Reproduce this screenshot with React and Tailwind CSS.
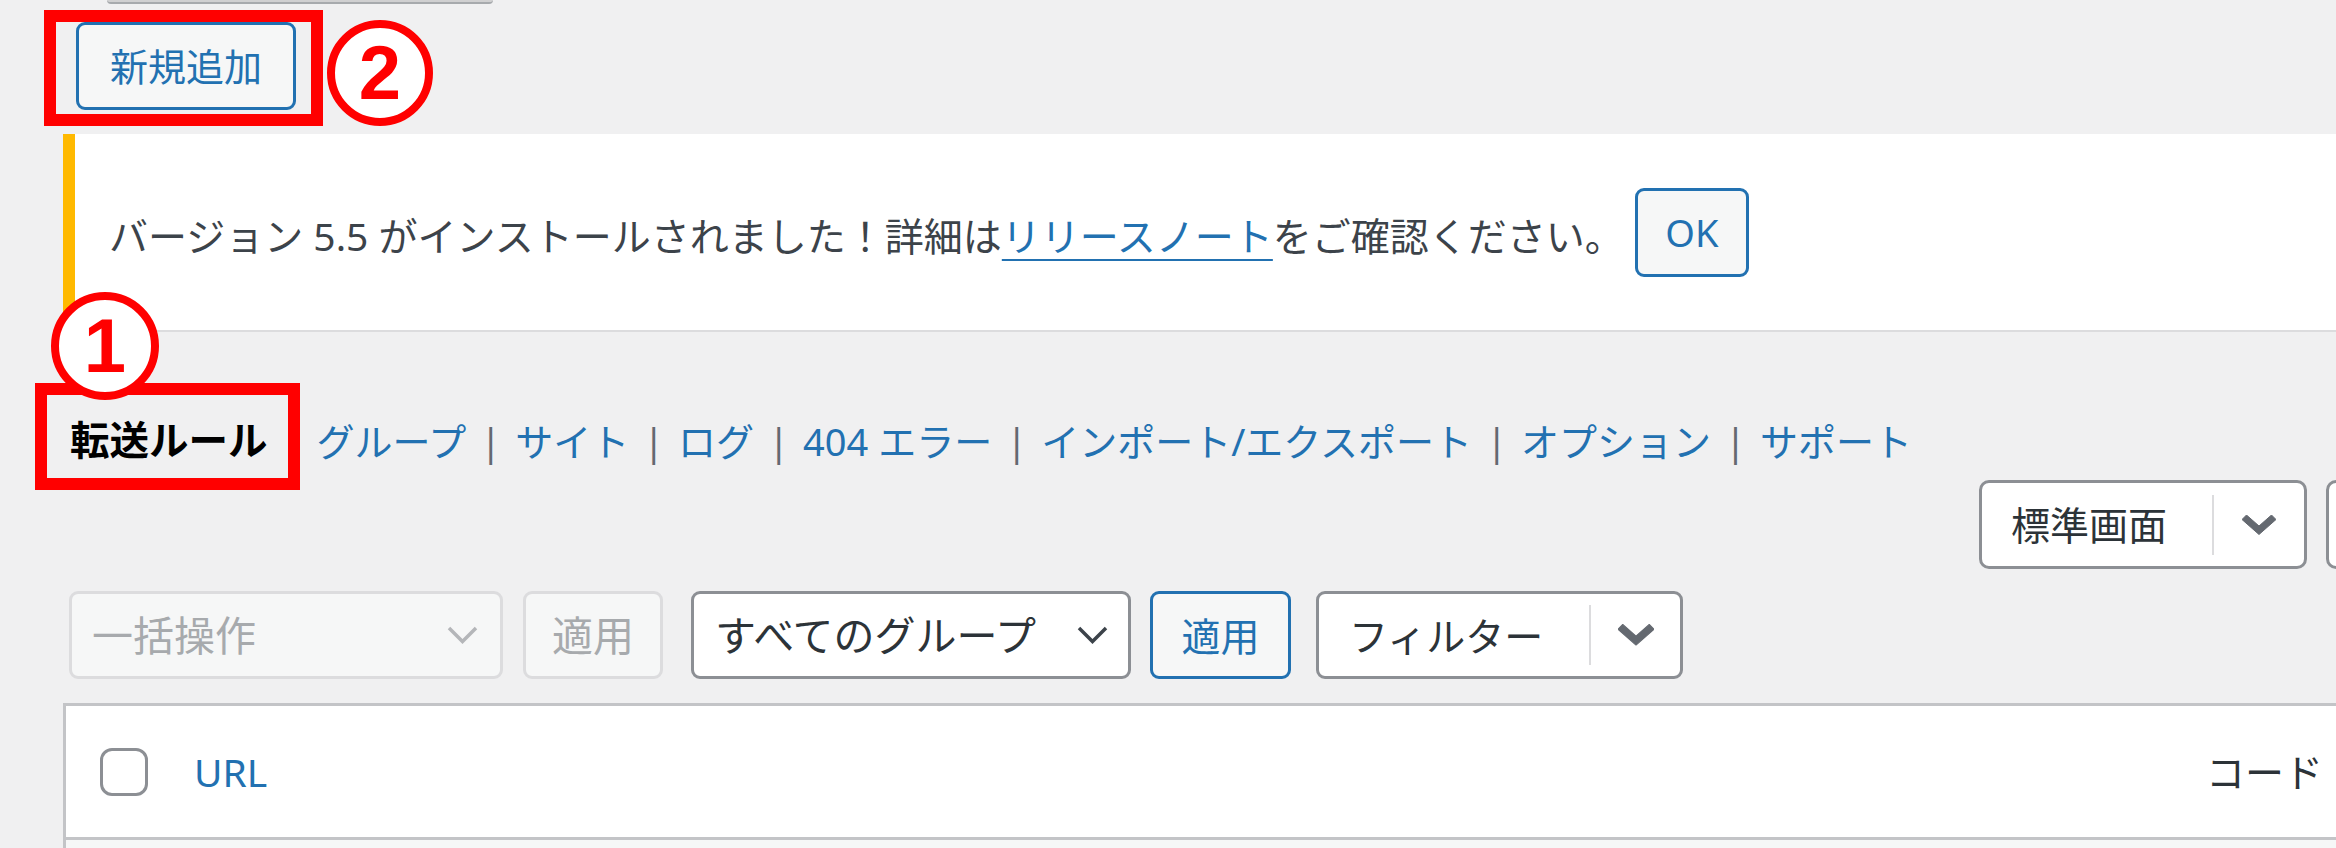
const font = "font-['Noto_Sans','Noto_Sans_CJK_JP',sans-serif]"

function ThinChevron({ color }) {
  return (
    <svg width="31" height="18" viewBox="0 0 31 18" fill="none">
      <polyline points="2,2 15.5,15.5 29,2" stroke={color} strokeWidth="3.5" />
    </svg>
  )
}

function ThickChevron({ w = 34, h = 20 }) {
  return (
    <svg width={w} height={h} viewBox="0 0 34 20">
      <path
        d="M0 4.5 L4.5 0 L17 11 L29.5 0 L34 4.5 L17 19.5 Z"
        fill="#646970"
        stroke="#646970"
        strokeWidth="1"
        strokeLinejoin="round"
      />
    </svg>
  )
}

const tabs = ['グループ', 'サイト', 'ログ', '404 エラー', 'インポート/エクスポート', 'オプション', 'サポート']

function Sep() {
  return <span className="mx-[14px] text-[#646970]">|</span>
}

function Badge({ num, className }) {
  return (
    <div
      className={`absolute flex items-center justify-center rounded-full border-[8px] border-[#ff0000] bg-white font-['Liberation_Sans',Arial,sans-serif] text-[76px] font-bold leading-none text-[#ff0000] ${className}`}
    >
      {num}
    </div>
  )
}

export default function App() {
  return (
    <div className={`relative h-[848px] w-[2336px] overflow-hidden bg-[#f0f0f1] ${font}`}>
      <div className="flex w-[2464px] flex-col pl-[64px]">
        {/* bottom of the element above */}
        <div className="ml-[43px] h-[4px] w-[386px] rounded-b-[6px] border-b-2 border-[#a7aaad] bg-[#d0d0d1]" />

        <div className="mt-[18px] flex">
          <button className="ml-[12px] flex h-[88px] w-[220px] items-center justify-center rounded-[9px] border-[3px] border-[#2271b1] bg-[#f6f7f7] text-[38px] leading-none text-[#2271b1]">
            新規追加
          </button>
        </div>

        {/* update notice */}
        <div className="ml-[-1px] mt-[24px] flex h-[198px] items-center border-b-2 border-l-[12px] border-b-[#dcdcde] border-l-[#ffb900] bg-white pl-[34px] text-[39px] text-[#3c434a]">
          <p className="mt-[7px] whitespace-nowrap leading-none">
            バージョン 5.5 がインストールされました！詳細は
            <a className="text-[#2271b1] underline decoration-2 underline-offset-[8px]">リリースノート</a>
            をご確認ください。
          </p>
          <button className="ml-[11px] flex h-[89px] w-[114px] items-center justify-center rounded-[9px] border-[3px] border-[#2271b1] bg-[#f6f7f7] text-[38px] leading-none text-[#2271b1]">
            OK
          </button>
        </div>

        {/* sub navigation */}
        <div className="mt-[83px] flex h-[52px] items-center whitespace-nowrap text-[38px] leading-none">
          <span className="ml-[6px] text-[39.5px] font-bold text-black">転送ルール</span>
          {tabs.map((t) => (
            <span key={t} className="flex items-center">
              <Sep />
              <a className="text-[#2271b1]">{t}</a>
            </span>
          ))}
        </div>

        {/* display mode */}
        <div className="mt-[13px] flex justify-end">
          <div className="flex h-[89px] w-[328px] items-center rounded-[10px] border-[3px] border-[#8c8f94] bg-white text-[39px] leading-none text-[#2c3338]">
            <span className="ml-[29px] flex-1">標準画面</span>
            <span className="h-[60px] w-[2px] bg-[#dcdcde]" />
            <span className="flex w-[90px] justify-center">
              <ThickChevron />
            </span>
          </div>
          <div className="ml-[19px] h-[89px] w-[138px] rounded-[10px] border-[3px] border-[#8c8f94] bg-white" />
        </div>

        {/* table nav */}
        <div className="ml-[5px] mt-[22px] flex items-center leading-none">
          <div className="flex h-[88px] w-[434px] items-center justify-between rounded-[9px] border-[3px] border-[#dcdcde] bg-[#f6f7f7] pl-[20px] pr-[22px] text-[41px] text-[#a7aaad]">
            <span>一括操作</span>
            <ThinChevron color="#b4b6b9" />
          </div>
          <button className="ml-[20px] flex h-[88px] w-[140px] items-center justify-center rounded-[9px] border-[3px] border-[#dcdcde] bg-[#f6f7f7] text-[41px] text-[#a7aaad]">
            適用
          </button>
          <div className="ml-[28px] flex h-[88px] w-[440px] items-center justify-between rounded-[9px] border-[3px] border-[#8c8f94] bg-white pl-[21px] pr-[20px] text-[41px] text-[#2c3338]">
            <span>すべてのグループ</span>
            <ThinChevron color="#3c434a" />
          </div>
          <button className="ml-[19px] flex h-[88px] w-[141px] items-center justify-center rounded-[9px] border-[3px] border-[#2271b1] bg-[#f6f7f7] text-[39px] text-[#2271b1]">
            適用
          </button>
          <div className="ml-[25px] flex h-[88px] w-[367px] items-center rounded-[9px] border-[3px] border-[#8c8f94] bg-white text-[39px] text-[#2c3338]">
            <span className="ml-[30px] flex-1">フィルター</span>
            <span className="h-[60px] w-[2px] bg-[#dcdcde]" />
            <span className="flex w-[89px] justify-center">
              <ThickChevron w={36} h={22} />
            </span>
          </div>
        </div>

        {/* list table */}
        <div className="ml-[-1px] mt-[24px] border-l-[3px] border-t-[3px] border-[#c3c4c7] bg-white">
          <div className="flex h-[134px] items-center border-b-[3px] border-[#c3c4c7] text-[39px] leading-none">
            <span className="ml-[34px] h-[48px] w-[48px] rounded-[12px] border-[3px] border-[#8c8f94] bg-white" />
            <a className="ml-[46px] flex-1 text-[#2271b1]">URL</a>
            <span className="w-[258px] text-[#2c3338]">コード</span>
          </div>
          <div className="h-[60px] bg-[#f6f7f7]" />
        </div>
      </div>

      {/* annotations */}
      <div className="absolute left-[44px] top-[10px] h-[116px] w-[279px] border-[12px] border-[#ff0000]" />
      <Badge num="2" className="left-[327px] top-[20px] h-[106px] w-[106px]" />
      <div className="absolute left-[35px] top-[383px] h-[107px] w-[265px] border-[12px] border-[#ff0000]" />
      <Badge num="1" className="left-[51px] top-[292px] h-[108px] w-[108px]" />
    </div>
  )
}
